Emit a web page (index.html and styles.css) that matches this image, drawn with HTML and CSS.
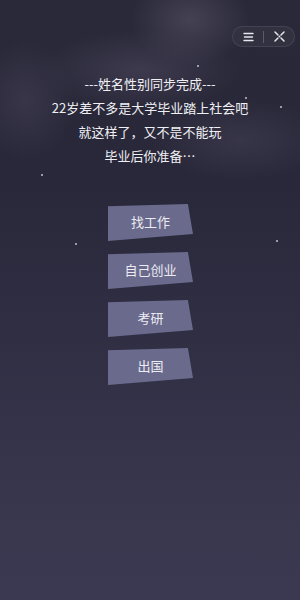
FILE: index.html
```html
<!DOCTYPE html>
<html lang="zh-CN">
<head>
  <meta charset="UTF-8" />
  <meta name="viewport" content="width=device-width, initial-scale=1.0" />
  <title>人生重开</title>
  <link rel="stylesheet" href="styles.css">
</head>
<body>
  <div id="screen">
    <div class="stars">
      <span class="star" style="left:197px;top:65px"></span>
      <span class="star" style="left:245px;top:97px"></span>
      <span class="star" style="left:41px;top:174px"></span>
      <span class="star" style="left:276px;top:240px"></span>
      <span class="star" style="left:75px;top:243px"></span>
      <span class="star" style="left:280px;top:106px"></span>
    </div>

    <div class="topbar">
      <div class="capsule">
        <button class="cap-btn" aria-label="menu">
          <svg width="11" height="10" viewBox="0 0 11 10">
            <path d="M1 1.5h9M1.5 5h8M1 8.5h9" stroke="#e6e6ee" stroke-width="1.4" stroke-linecap="round"/>
          </svg>
        </button>
        <span class="cap-sep"></span>
        <button class="cap-btn" aria-label="close">
          <svg width="13" height="13" viewBox="0 0 13 13">
            <path d="M2 2l3 3M11 2l-3 3M2 11l3-3M11 11l-3-3" stroke="#e6e6ee" stroke-width="1.5" stroke-linecap="round"/>
            <circle cx="6.5" cy="6.5" r="1" fill="#e6e6ee"/>
          </svg>
        </button>
      </div>
    </div>

    <div id="story">
      <p>---姓名性别同步完成---</p>
      <p>22岁差不多是大学毕业踏上社会吧</p>
      <p>就这样了，又不是不能玩</p>
      <p>毕业后你准备…</p>
    </div>

    <div id="choices">
      <button class="choice">找工作</button>
      <button class="choice">自己创业</button>
      <button class="choice">考研</button>
      <button class="choice">出国</button>
    </div>
  </div>
</body>
</html>
```

FILE: styles.css
```css
* {
  box-sizing: border-box;
}
body {
  margin: 0;
  font-family: "Noto Sans CJK SC", "Noto Sans", sans-serif;
  overflow: hidden;
}
#screen {
  position: relative;
  width: 300px;
  height: 600px;
  overflow: hidden;
  background:
    radial-gradient(ellipse 60px 45px at 190px 20px, rgba(86,82,100,0.6), transparent),
    radial-gradient(ellipse 100px 40px at 140px 70px, rgba(76,72,92,0.55), transparent),
    radial-gradient(ellipse 50px 60px at 25px 100px, rgba(70,66,86,0.5), transparent),
    radial-gradient(ellipse 90px 40px at 240px 140px, rgba(72,68,88,0.45), transparent),
    linear-gradient(to bottom, #2a2939 0%, #29283a 30%, #302e43 55%, #39374d 85%, #3b3852 100%);
  color: #f0f0f4;
}
.star {
  position: absolute;
  width: 2px;
  height: 2px;
  border-radius: 50%;
  background: rgba(230,230,245,0.8);
}
.topbar {
  display: flex;
  justify-content: flex-end;
  padding: 26px 5px 0 0;
}
.capsule {
  display: flex;
  align-items: center;
  width: 63px;
  height: 21px;
  border-radius: 11px;
  background: rgba(52,51,66,0.85);
  border: 1px solid rgba(80,78,96,0.6);
}
.cap-btn {
  flex: 1;
  height: 100%;
  display: flex;
  align-items: center;
  justify-content: center;
  border: none;
  padding: 0;
  background: none;
}
.cap-sep {
  width: 1px;
  height: 12px;
  background: rgba(120,118,140,0.6);
}
#story {
  margin-top: 25px;
  text-align: center;
  font-size: 13px;
  line-height: 24px;
}
#story p {
  margin: 0;
}
#choices {
  display: flex;
  flex-direction: column;
  align-items: flex-start;
  gap: 11px;
  margin-top: 36px;
  padding-left: 108px;
}
.choice {
  width: 85px;
  height: 37px;
  border: none;
  padding: 0 0 3px 0;
  background: #6a6a8d;
  color: #ececf2;
  font-family: inherit;
  font-size: 13px;
  clip-path: polygon(0 6%, 94% 0, 100% 81%, 0 100%);
}
```
